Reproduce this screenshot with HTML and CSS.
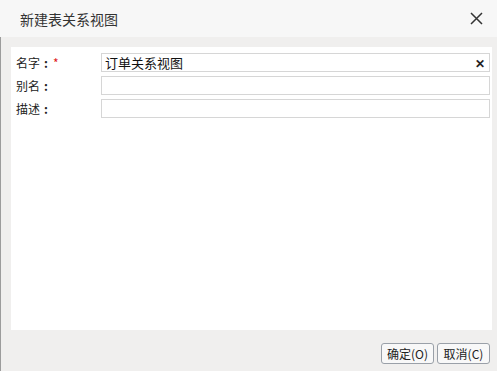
FILE: index.html
```html
<!DOCTYPE html>
<html lang="zh">
<head>
  <meta charset="UTF-8">
  <title>新建表关系视图</title>
  <link rel="stylesheet" href="styles.css">
</head>
<body>
  <div class="dlg">
    <div class="head">
      <span class="title">新建表关系视图</span>
      <svg class="close" width="13" height="13" viewBox="0 0 13 13">
        <path d="M1 1L12 12M12 1L1 12" stroke="#333" stroke-width="1.5"/>
      </svg>
    </div>
    <div class="body">
      <div class="panel">
        <div class="form">
          <label>名字<span class="colon">:</span><span class="req">*</span></label>
          <div class="field">
            <input type="text" value="订单关系视图">
            <span class="clear">&#x2715;</span>
          </div>
          <label>别名<span class="colon">:</span></label>
          <div class="field"><input type="text"></div>
          <label>描述<span class="colon">:</span></label>
          <div class="field"><input type="text"></div>
        </div>
      </div>
      <div class="foot">
        <button>确定(O)</button>
        <button>取消(C)</button>
      </div>
    </div>
  </div>
</body>
</html>
```

FILE: styles.css
```css
html, body {
  margin: 0;
  height: 100%;
}

body {
  font-family: "Noto Sans CJK SC", "Noto Sans", sans-serif;
  font-size: 12px;
  color: #222;
}

.dlg {
  display: flex;
  flex-direction: column;
  height: 100%;
}

.head {
  height: 37px;
  background: #f7f7f7;
  display: flex;
  align-items: center;
  justify-content: space-between;
  padding: 0 14px 0 20px;
}

.title {
  font-size: 14px;
  color: #333;
}

.body {
  flex: 1;
  background: #f0efee;
  border-left: 1px solid #9c9c9c;
  padding: 10px 5px 0 10px;
  display: flex;
  flex-direction: column;
}

.panel {
  background: #fff;
  height: 283px;
  padding: 6px 2px 0 5px;
  box-sizing: border-box;
}

.form {
  display: grid;
  grid-template-columns: 85px 1fr;
  row-gap: 4px;
  align-items: center;
}

.form label {
  line-height: 19px;
}

.colon {
  display: inline-block;
  width: 12px;
  text-align: center;
  font-weight: bold;
}

.req {
  color: #e02020;
  margin-left: 1px;
}

.field {
  position: relative;
}

.field input {
  width: 100%;
  height: 19px;
  box-sizing: border-box;
  border: 1px solid #d6d6d6;
  padding: 0 3px;
  font-family: inherit;
  font-size: 13px;
  color: #111;
  outline: none;
}

.clear {
  position: absolute;
  right: 5px;
  top: 1px;
  font-size: 12px;
  font-weight: bold;
  color: #222;
}

.foot {
  display: flex;
  justify-content: flex-end;
  gap: 3px;
  padding: 13px 2px 0 0;
}

.foot button {
  width: 53px;
  height: 21px;
  padding: 0;
  background: #f8f8f8;
  border: 1px solid #9aa0a8;
  border-radius: 3px;
  font-family: inherit;
  font-size: 12px;
  color: #222;
}
```
